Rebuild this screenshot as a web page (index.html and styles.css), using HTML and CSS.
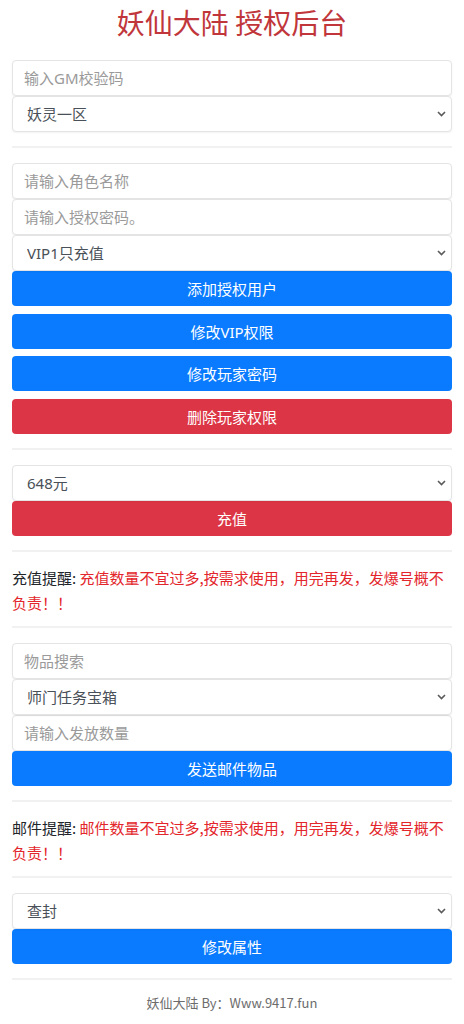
FILE: index.html
```html
<!DOCTYPE html>
<html lang="zh-CN">
<head>
<meta charset="utf-8">
<title>妖仙大陆 授权后台</title>
<link rel="stylesheet" href="styles.css">
</head>
<body>
<div class="page">
  <h1 class="title">妖仙大陆 授权后台</h1>

  <div class="group">
    <input class="field" type="text" placeholder="输入GM校验码">
    <div class="select-wrap">
      <select class="field select"><option>妖灵一区</option></select>
      <svg class="chev" width="9" height="6" viewBox="0 0 9 6"><path d="M1 1 L4.5 4.5 L8 1" fill="none" stroke="#5a5a5a" stroke-width="1.6"/></svg>
    </div>
  </div>
  <hr class="sep">

  <div class="group">
    <input class="field" type="text" placeholder="请输入角色名称">
    <input class="field" type="text" placeholder="请输入授权密码。">
    <div class="select-wrap">
      <select class="field select"><option>VIP1只充值</option></select>
      <svg class="chev" width="9" height="6" viewBox="0 0 9 6"><path d="M1 1 L4.5 4.5 L8 1" fill="none" stroke="#5a5a5a" stroke-width="1.6"/></svg>
    </div>
    <button class="btn btn-blue">添加授权用户</button>
    <button class="btn btn-blue spaced">修改VIP权限</button>
    <button class="btn btn-blue spaced">修改玩家密码</button>
    <button class="btn btn-red spaced">删除玩家权限</button>
  </div>
  <hr class="sep">

  <div class="group">
    <div class="select-wrap">
      <select class="field select"><option>648元</option></select>
      <svg class="chev" width="9" height="6" viewBox="0 0 9 6"><path d="M1 1 L4.5 4.5 L8 1" fill="none" stroke="#5a5a5a" stroke-width="1.6"/></svg>
    </div>
    <button class="btn btn-red">充值</button>
  </div>
  <hr class="sep sep-before-note">

  <p class="note"><span class="label">充值提醒:</span> <span class="warn">充值数量不宜过多,按需求使用，用完再发，发爆号概不</span><span class="warn">负责！！</span></p>
  <hr class="sep sep-after-note">

  <div class="group">
    <input class="field" type="text" placeholder="物品搜索">
    <div class="select-wrap">
      <select class="field select"><option>师门任务宝箱</option></select>
      <svg class="chev" width="9" height="6" viewBox="0 0 9 6"><path d="M1 1 L4.5 4.5 L8 1" fill="none" stroke="#5a5a5a" stroke-width="1.6"/></svg>
    </div>
    <input class="field" type="text" placeholder="请输入发放数量">
    <button class="btn btn-blue">发送邮件物品</button>
  </div>
  <hr class="sep sep-before-note">

  <p class="note"><span class="label">邮件提醒:</span> <span class="warn">邮件数量不宜过多,按需求使用，用完再发，发爆号概不</span><span class="warn">负责！！</span></p>
  <hr class="sep sep-after-note">

  <div class="group">
    <div class="select-wrap">
      <select class="field select"><option>查封</option></select>
      <svg class="chev" width="9" height="6" viewBox="0 0 9 6"><path d="M1 1 L4.5 4.5 L8 1" fill="none" stroke="#5a5a5a" stroke-width="1.6"/></svg>
    </div>
    <button class="btn btn-blue">修改属性</button>
  </div>
  <hr class="sep">

  <footer class="footer">妖仙大陆 By：Www.9417.fun</footer>
</div>
</body>
</html>
```

FILE: styles.css
```css
* { box-sizing: border-box; }

html, body {
  margin: 0;
  padding: 0;
  background: #ffffff;
}

body {
  font-family: "Noto Sans", "Noto Sans CJK SC", sans-serif;
  font-size: 15px;
  color: #212529;
}

.page {
  padding: 0 12px;
}

.title {
  margin: 0 0 15px;
  font-family: "Noto Sans CJK SC", sans-serif;
  font-size: 28px;
  font-weight: 400;
  line-height: 45px;
  text-align: center;
  color: #c0363a;
}

.group {
  display: flex;
  flex-direction: column;
}

.field {
  display: block;
  width: 100%;
  height: 36px;
  margin: 0;
  padding: 0 11px;
  font-family: "Noto Sans", "Noto Sans CJK SC", sans-serif;
  font-size: 15px;
  color: #495057;
  background: #ffffff;
  border: 1px solid #e4e4e4;
  border-radius: 4px;
  box-shadow: 0 1px 2px rgba(0, 0, 0, 0.05);
  outline: none;
}

.field::placeholder {
  color: #9a9a9a;
}

.select-wrap {
  position: relative;
}

.select {
  padding-left: 14px;
  padding-right: 28px;
  -webkit-appearance: none;
  appearance: none;
}

.chev {
  position: absolute;
  right: 6px;
  top: 15px;
  pointer-events: none;
}

.btn {
  display: block;
  width: 100%;
  height: 35px;
  margin: 0;
  padding: 0;
  font-family: "Noto Sans", "Noto Sans CJK SC", sans-serif;
  font-size: 15px;
  color: #ffffff;
  border: none;
  border-radius: 4px;
  cursor: pointer;
}

.spaced {
  margin-top: 7.5px;
}

.btn-blue {
  background: #0a7bff;
}

.btn-red {
  background: #dc3545;
}

.sep {
  height: 2px;
  margin: 14px 0 15px;
  border: none;
  background: #f1f1f1;
}

.sep-before-note {
  margin-bottom: 13px;
}

.sep-after-note {
  margin-top: 11px;
}

.note {
  margin: 0;
  font-family: "Noto Sans CJK SC", sans-serif;
  font-size: 15px;
  line-height: 25px;
  color: #212529;
}

.warn {
  color: #e3262b;
}

.footer {
  margin-top: -2px;
  font-family: "Noto Sans CJK SC", sans-serif;
  font-size: 13px;
  line-height: 20px;
  text-align: center;
  color: #6c6c6c;
}
```
